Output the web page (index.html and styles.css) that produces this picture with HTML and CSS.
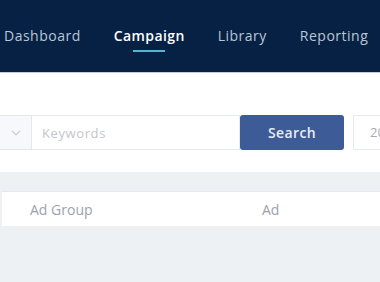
FILE: index.html
```html
<html>

<head>
  <meta http-equiv="Content-Type" content="text/html; charset=utf-8" />
  <title>Campaign</title>
  <link rel="stylesheet" href="styles.css">
</head>

<body>
  <div class="topbar">
    <nav class="nav">
      <a class="nav-item">Dashboard</a>
      <a class="nav-item active">Campaign</a>
      <a class="nav-item">Library</a>
      <a class="nav-item">Reporting</a>
    </nav>
  </div>

  <div class="filters">
    <div class="select">
      <svg width="10" height="6" viewBox="0 0 10 6"><path d="M1 1l4 4 4-4" fill="none" stroke="#c9ced6" stroke-width="1.2"/></svg>
    </div>
    <input class="keywords" type="text" placeholder="Keywords">
    <button class="btn-search">Search</button>
    <div class="date">2019</div>
  </div>

  <div class="table-head">
    <div class="col col-group">Ad Group</div>
    <div class="col col-ad">Ad</div>
  </div>
</body>

</html>
```

FILE: styles.css
```css
body,
html {
  margin: 0;
  padding: 0;
}

body {
  background: #eef1f4;
  font-family: "Open Sans", "Liberation Sans", sans-serif;
  overflow: hidden;
}

.topbar {
  height: 72px;
  background: #062144;
  border-bottom: 1px solid #c9ccd2;
}

.nav {
  display: flex;
  gap: 33px;
  margin-left: 4px;
  padding-top: 26px;
  white-space: nowrap;
}

.nav-item {
  position: relative;
  font-size: 14px;
  line-height: 20px;
  letter-spacing: 0.5px;
  color: #b9c6d6;
}

.nav-item.active {
  color: #fff;
  font-weight: 600;
  letter-spacing: 0.4px;
}

.nav-item.active::after {
  content: "";
  position: absolute;
  left: 50%;
  margin-left: -16px;
  top: 24px;
  width: 32px;
  height: 2px;
  background: #53b4d6;
}

.filters {
  display: flex;
  align-items: stretch;
  height: 35px;
  padding: 42px 0 22px;
  background: #fff;
}

.select {
  display: flex;
  align-items: center;
  justify-content: center;
  width: 40px;
  flex: none;
  margin-left: -8px;
  padding-left: 8px;
  background: #f7f8fb;
  border: 1px solid #e4e8ee;
  box-sizing: border-box;
}

.keywords {
  width: 208px;
  flex: none;
  border: 1px solid #e6e9ee;
  border-left: none;
  padding: 0 10px;
  box-sizing: border-box;
  font-family: inherit;
  font-size: 13px;
  letter-spacing: 0.6px;
  outline: none;
}

.keywords::placeholder {
  color: #c2c6cc;
}

.btn-search {
  width: 104px;
  flex: none;
  border: none;
  border-radius: 3px;
  background: #3d5b96;
  color: #e8edf5;
  font-family: inherit;
  font-size: 14px;
  font-weight: 600;
  letter-spacing: 0.4px;
}

.date {
  flex: none;
  margin-left: 9px;
  width: 120px;
  border: 1px solid #e6e9ee;
  padding-left: 16px;
  line-height: 33px;
  font-size: 13px;
  color: #a7acb3;
}

.table-head {
  display: flex;
  height: 35px;
  margin: 19px 0 0 2px;
  background: #fff;
  align-items: center;
  font-size: 14px;
  color: #9ca2aa;
  border-top: 1px solid #e6e9f0;
  box-sizing: border-box;
}

.col-group {
  width: 232px;
  padding-left: 28px;
}
```
